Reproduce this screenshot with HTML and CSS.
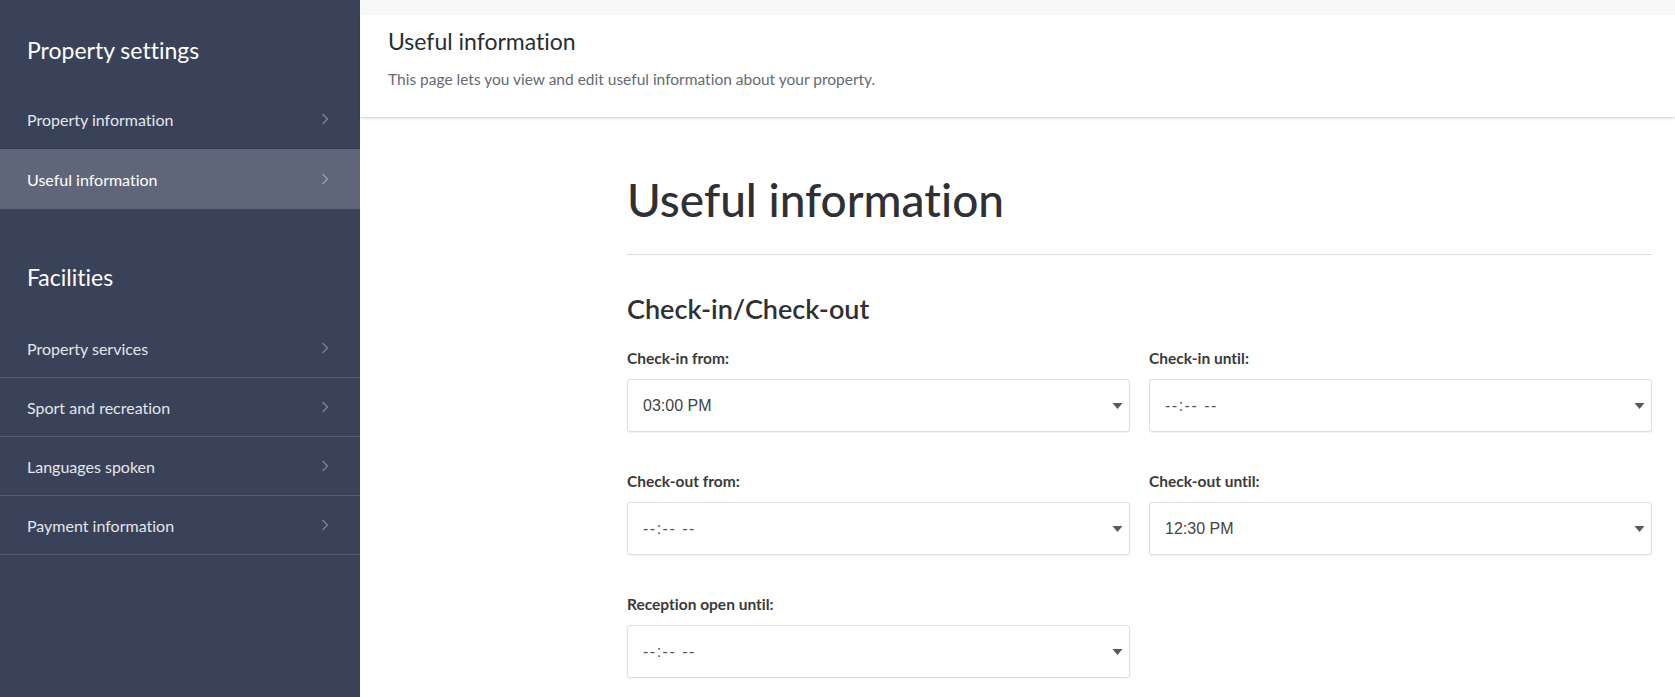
FILE: index.html
```html
<!DOCTYPE html>
<html lang="en">
<head>
<meta charset="utf-8">
<title>Useful information</title>
<link rel="stylesheet" href="styles.css">
</head>
<body>
<aside class="sidebar">
  <h2 class="side-title first">Property settings</h2>
  <ul class="side-list">
    <li class="side-item"><span>Property information</span><svg class="chev" viewBox="0 0 8 12"><polyline points="1.5,1 6.5,6 1.5,11"/></svg></li>
    <li class="side-item active"><span>Useful information</span><svg class="chev" viewBox="0 0 8 12"><polyline points="1.5,1 6.5,6 1.5,11"/></svg></li>
  </ul>
  <h2 class="side-title">Facilities</h2>
  <ul class="side-list bordered">
    <li class="side-item"><span>Property services</span><svg class="chev" viewBox="0 0 8 12"><polyline points="1.5,1 6.5,6 1.5,11"/></svg></li>
    <li class="side-item"><span>Sport and recreation</span><svg class="chev" viewBox="0 0 8 12"><polyline points="1.5,1 6.5,6 1.5,11"/></svg></li>
    <li class="side-item"><span>Languages spoken</span><svg class="chev" viewBox="0 0 8 12"><polyline points="1.5,1 6.5,6 1.5,11"/></svg></li>
    <li class="side-item"><span>Payment information</span><svg class="chev" viewBox="0 0 8 12"><polyline points="1.5,1 6.5,6 1.5,11"/></svg></li>
  </ul>
</aside>
<main class="main">
  <div class="topstrip"></div>
  <header class="page-header">
    <h1 class="header-title">Useful information</h1>
    <p class="header-sub">This page lets you view and edit useful information about your property.</p>
  </header>
  <section class="content">
    <h1 class="big-title">Useful information</h1>
    <hr class="rule">
    <h2 class="section-title">Check-in/Check-out</h2>
    <div class="fields">
      <div class="field">
        <label class="label">Check-in from:</label>
        <div class="select"><span class="value">03:00 PM</span><svg class="caret" viewBox="0 0 10 6"><polygon points="0,0 10,0 5,6"/></svg></div>
      </div>
      <div class="field">
        <label class="label">Check-in until:</label>
        <div class="select"><span class="value empty">--:-- --</span><svg class="caret" viewBox="0 0 10 6"><polygon points="0,0 10,0 5,6"/></svg></div>
      </div>
      <div class="field">
        <label class="label">Check-out from:</label>
        <div class="select"><span class="value empty">--:-- --</span><svg class="caret" viewBox="0 0 10 6"><polygon points="0,0 10,0 5,6"/></svg></div>
      </div>
      <div class="field">
        <label class="label">Check-out until:</label>
        <div class="select"><span class="value">12:30 PM</span><svg class="caret" viewBox="0 0 10 6"><polygon points="0,0 10,0 5,6"/></svg></div>
      </div>
      <div class="field">
        <label class="label">Reception open until:</label>
        <div class="select"><span class="value empty">--:-- --</span><svg class="caret" viewBox="0 0 10 6"><polygon points="0,0 10,0 5,6"/></svg></div>
      </div>
    </div>
  </section>
</main>
</body>
</html>
```

FILE: styles.css
```css
* { box-sizing: border-box; }
html, body { margin: 0; padding: 0; }
body {
  display: flex;
  height: 697px;
  overflow: hidden;
  font-family: Lato, "Noto Sans", sans-serif;
  font-variant-ligatures: no-common-ligatures;
  font-feature-settings: "liga" 0, "dlig" 0;
  color: #333;
  background: #fff;
}
.sidebar {
  width: 360px;
  flex: 0 0 360px;
  background: #3a4259;
  color: #fff;
}
.side-title {
  margin: 54px 0 28px;
  padding-left: 27px;
  font-size: 23px;
  line-height: 28px;
  font-weight: 400;
  color: #fff;
}
.side-title.first { margin-top: 36px; margin-bottom: 26px; }
.side-list { list-style: none; margin: 0; padding: 0; }
.side-item {
  display: flex;
  align-items: center;
  justify-content: space-between;
  height: 59px;
  padding: 0 31px 0 27px;
  font-size: 16px;
  color: #e4e6eb;
  border-bottom: 1px solid #343b50;
}
.side-item.active {
  background: #5f667a;
  height: 60px;
  color: #fff;
  border-bottom: none;
}
.bordered .side-item { border-bottom: 1px solid #525a6e; }
.chev { width: 8px; height: 12px; }
.chev polyline { fill: none; stroke: #7d8497; stroke-width: 1.3; }
.active .chev polyline { stroke: #9aa0b0; }

.main { flex: 1; display: flex; flex-direction: column; min-width: 0; }
.topstrip { height: 15px; background: #f8f8f9; }
.page-header {
  height: 102px;
  padding: 12px 28px 0;
  background: #fff;
  box-shadow: 0 1px 2px rgba(0,0,0,0.14), 0 2px 4px rgba(0,0,0,0.05);
  position: relative;
  z-index: 1;
}
.header-title {
  margin: 0;
  font-size: 23px;
  line-height: 28px;
  font-weight: 400;
  color: #2b2d33;
}
.header-sub {
  margin: 14px 0 0;
  font-size: 15.5px;
  line-height: 20px;
  color: #666a72;
}
.content { padding: 0 23px 0 267px; }
.big-title {
  margin: 56px 0 0;
  font-size: 46px;
  line-height: 54px;
  font-weight: 500;
  color: #2f3033;
}
.rule {
  margin: 27px 0 0;
  border: 0;
  border-top: 1px solid #dcdcdc;
  height: 0;
}
.section-title {
  margin: 38px 0 0;
  font-size: 27px;
  line-height: 32px;
  font-weight: 600;
  color: #2f3033;
}
.fields {
  margin-top: 23px;
  display: grid;
  grid-template-columns: 1fr 1fr;
  column-gap: 19px;
  row-gap: 39px;
}
.field { display: flex; flex-direction: column; }
.label {
  font-size: 15.5px;
  line-height: 20px;
  font-weight: 700;
  color: #3a3a3a;
  margin-bottom: 11px;
}
.select {
  height: 53px;
  display: flex;
  align-items: center;
  justify-content: space-between;
  padding: 0 6px 0 15px;
  border: 1px solid #dedede;
  border-radius: 3px;
  box-shadow: 0 1px 2px rgba(0,0,0,0.06);
  background: #fff;
}
.value {
  font-family: "Liberation Sans", Arial, sans-serif;
  font-size: 16px;
  color: #444;
}
.value.empty { letter-spacing: 1.5px; color: #555; }
.caret { width: 11px; height: 6px; }
.caret polygon { fill: #5a5a5a; }
```
